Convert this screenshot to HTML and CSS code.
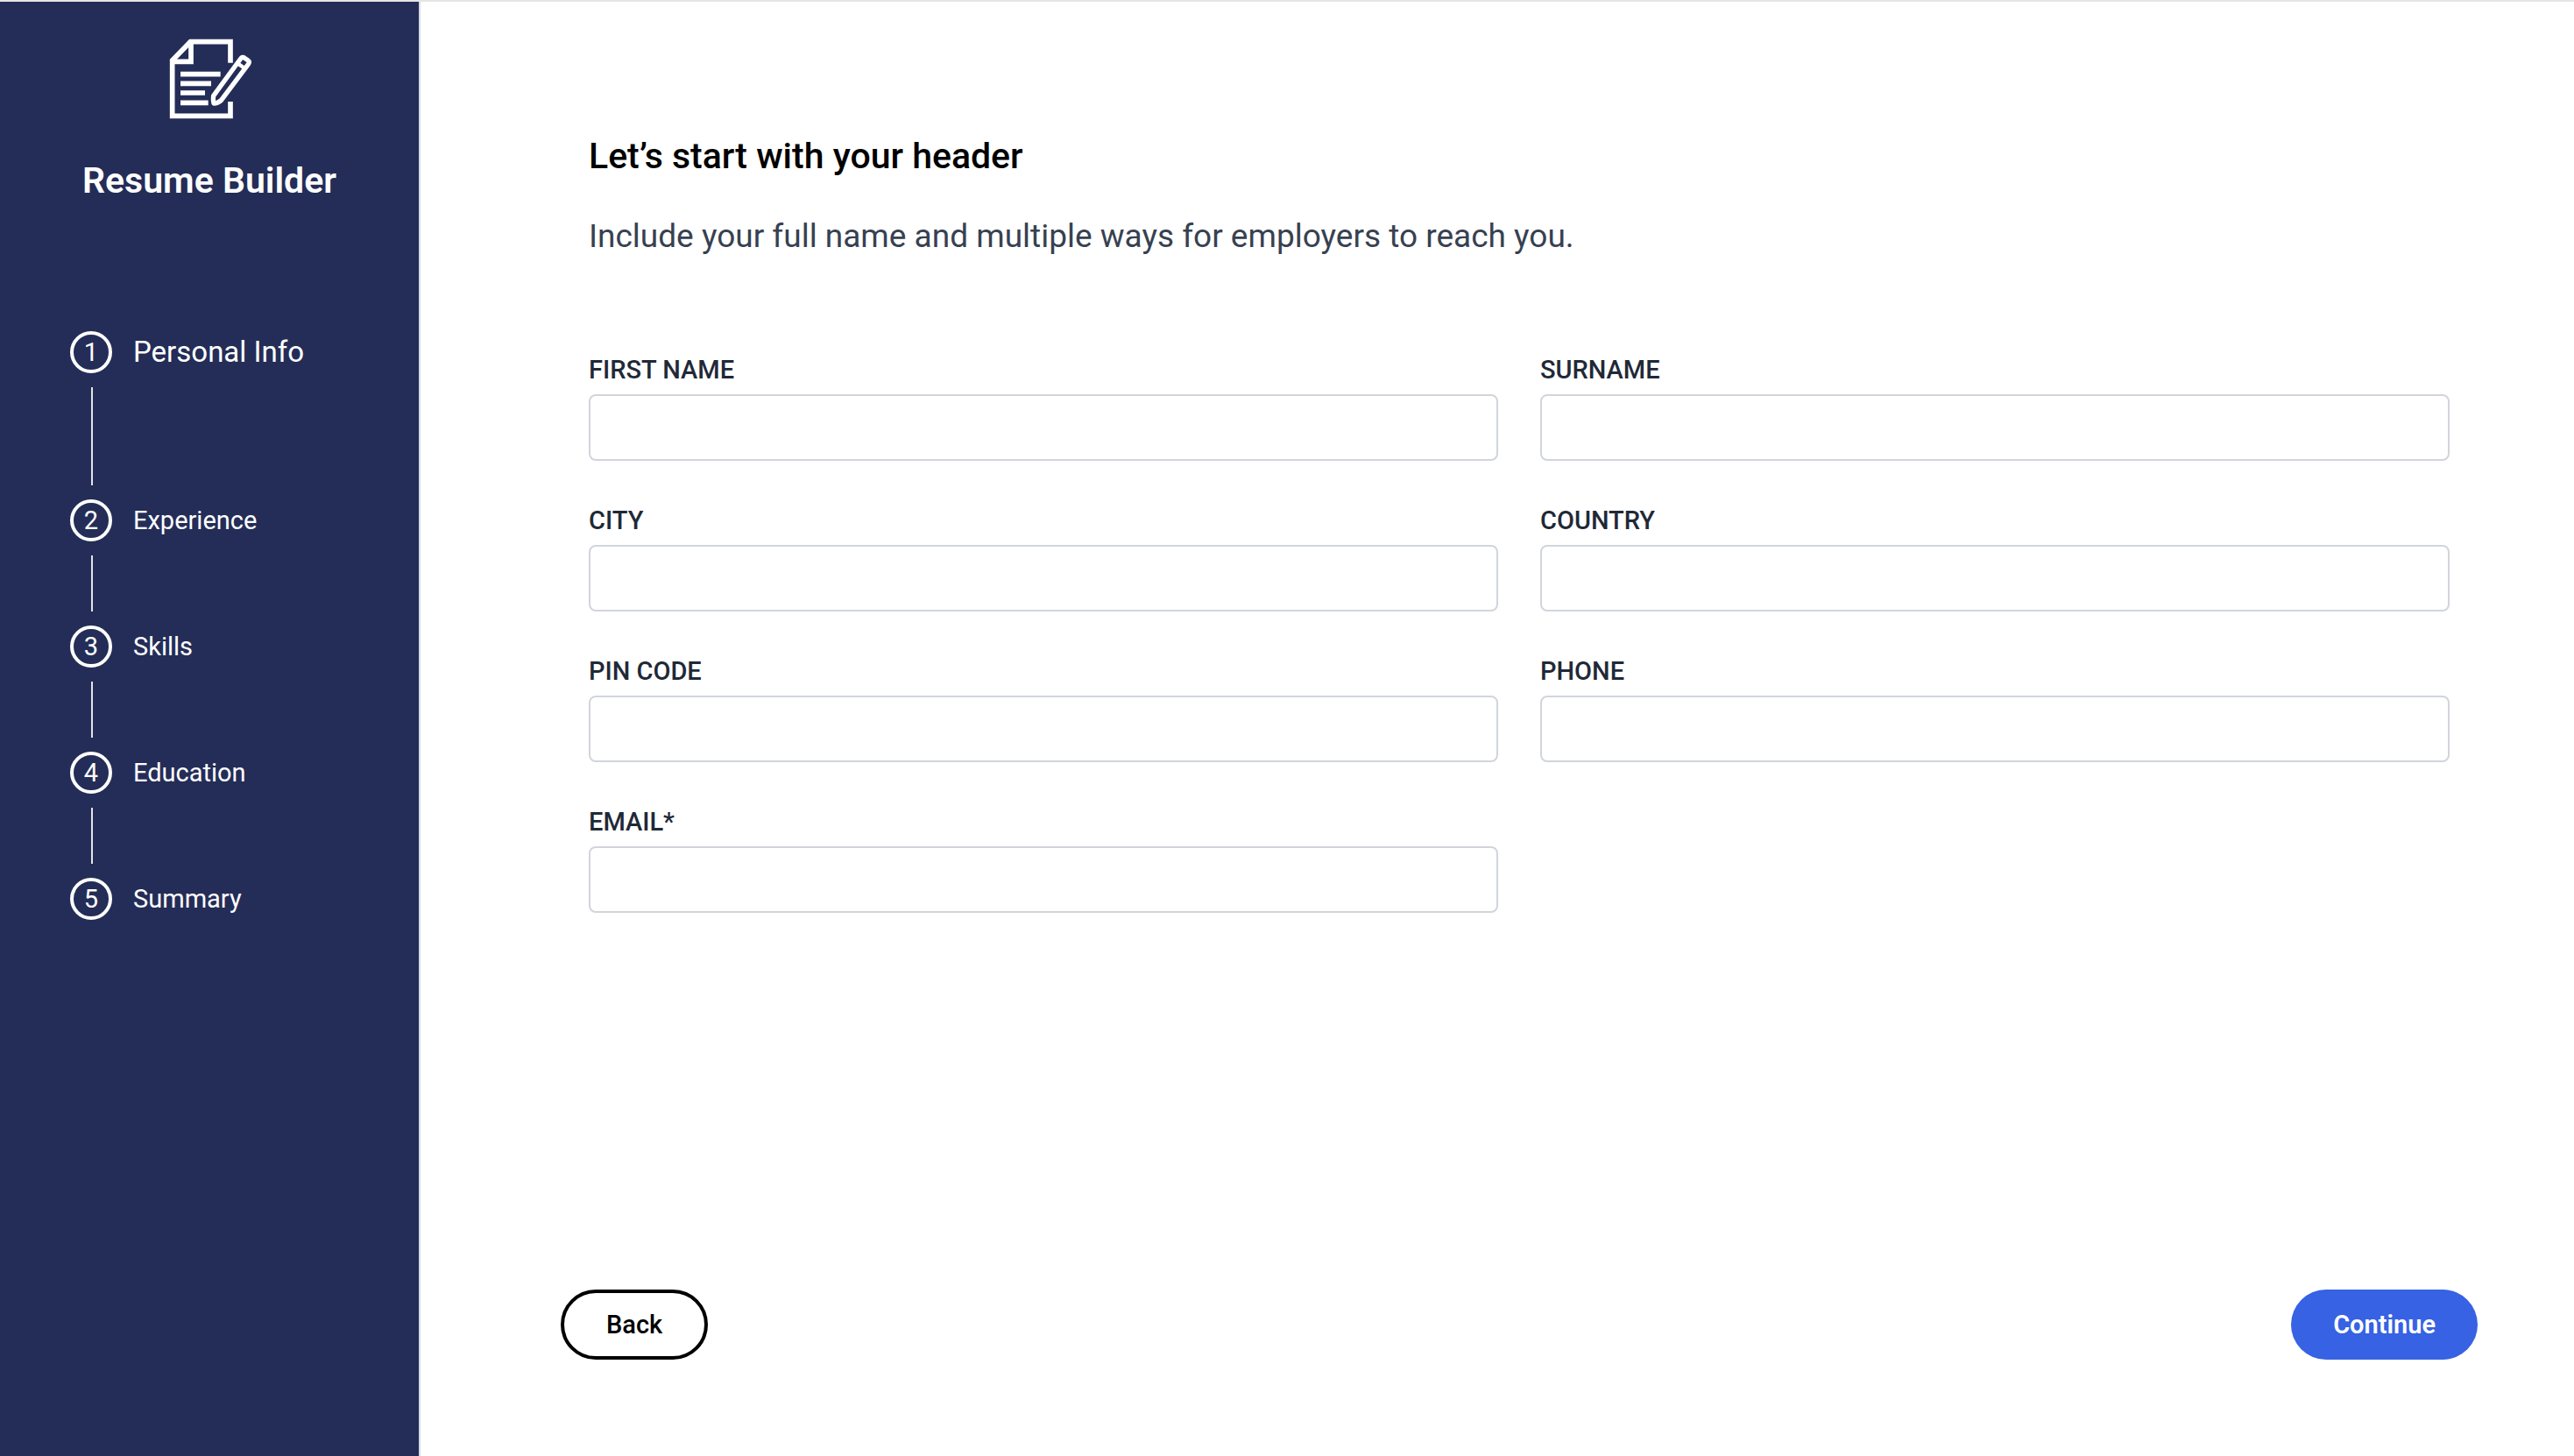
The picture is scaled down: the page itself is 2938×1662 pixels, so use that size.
FILE: index.html
```html
<!DOCTYPE html>
<html lang="en">
<head>
<meta charset="utf-8">
<meta name="viewport" content="width=device-width, initial-scale=1">
<title>Resume Builder</title>
<link rel="stylesheet" href="styles.css">
</head>
<body>
<div class="app">
  <aside class="sidebar">
    <div class="brand">
      <svg class="brand-icon" viewBox="33 36 288 288" fill="none" stroke="currentColor" stroke-width="17" aria-hidden="true">
        <path d="M249 125V53H112L50 117V307H249V258"/>
        <path d="M114 53V121H50"/>
        <path d="M78 164H215M78 196H183M78 228H162M78 262H173"/>
        <path stroke-width="16" stroke-linejoin="round" d="M191 238L284 111Q290 103 298 109L308 116Q316 122 310 130L217 254Q205 264 192 264Q189 250 191 238Z"/>
        <path stroke-width="13" d="M272 126L299 145"/>
      </svg>
      <h1 class="brand-name">Resume Builder</h1>
    </div>
    <ol class="steps">
      <li class="step step-current" aria-current="step"><span class="step-number">1</span><span class="step-label">Personal Info</span></li>
      <li class="step"><span class="step-number">2</span><span class="step-label">Experience</span></li>
      <li class="step"><span class="step-number">3</span><span class="step-label">Skills</span></li>
      <li class="step"><span class="step-number">4</span><span class="step-label">Education</span></li>
      <li class="step"><span class="step-number">5</span><span class="step-label">Summary</span></li>
    </ol>
  </aside>
  <main class="main">
    <form class="form">
      <div class="form-body">
        <h2 class="title">Let’s start with your header</h2>
        <p class="description">Include your full name and multiple ways for employers to reach you.</p>
        <div class="fields">
          <div class="field"><label for="first-name">FIRST NAME</label><input id="first-name" type="text"></div>
          <div class="field"><label for="surname">SURNAME</label><input id="surname" type="text"></div>
          <div class="field"><label for="city">CITY</label><input id="city" type="text"></div>
          <div class="field"><label for="country">COUNTRY</label><input id="country" type="text"></div>
          <div class="field"><label for="pin-code">PIN CODE</label><input id="pin-code" type="text"></div>
          <div class="field"><label for="phone">PHONE</label><input id="phone" type="tel"></div>
          <div class="field"><label for="email">EMAIL*</label><input id="email" type="email" required></div>
        </div>
      </div>
      <div class="actions">
        <button class="button button-outline" type="button">Back</button>
        <button class="button button-primary" type="submit">Continue</button>
      </div>
    </form>
  </main>
</div>
</body>
</html>
```
FILE: styles.css
```css
*,
*::before,
*::after {
  box-sizing: border-box;
}

body,
h1,
h2,
p,
ol {
  margin: 0;
  padding: 0;
}

body {
  font-family: Roboto, "Liberation Sans", sans-serif;
  font-size: 29px;
  line-height: 40px;
  color: #000;
  background: #fff;
}

.app {
  display: flex;
  min-height: 100vh;
  border-top: 2px solid #e5e5e5;
}

.sidebar {
  flex: none;
  width: 480px;
  color: #fff;
  background: #242d57;
  border-right: 2px solid #d8dbe3;
}

.brand {
  display: flex;
  flex-direction: column;
  align-items: center;
  gap: 40px;
  padding-top: 40px;
}

.brand-icon {
  width: 96px;
  height: 96px;
}

.brand-name {
  font-size: 41px;
  line-height: 56px;
  font-weight: 600;
}

.steps {
  padding: 144px 80px 0;
  list-style: none;
}

.step {
  display: grid;
  grid-template-columns: 48px 1fr;
  column-gap: 24px;
  align-items: center;
}

.step-number {
  display: flex;
  align-items: center;
  justify-content: center;
  height: 48px;
  border: 4px solid #fff;
  border-radius: 50%;
}

.step:not(:last-child)::after {
  content: "";
  width: 2px;
  height: 64px;
  margin: 16px 0 16px 24px;
  background: #e5e5e5;
}

.step-current .step-label {
  font-size: 33px;
}

.step-current:not(:last-child)::after {
  height: 112px;
}

.main {
  display: flex;
  flex: 1;
  padding: 148px 110px 110px 160px;
}

.form {
  display: flex;
  flex: 1;
  flex-direction: column;
  justify-content: space-between;
  gap: 48px;
}

.form-body {
  padding: 0 32px;
}

.title {
  font-size: 41px;
  line-height: 56px;
  font-weight: 500;
}

.description {
  margin-top: 36px;
  font-size: 37px;
  line-height: 56px;
  color: #374151;
}

.fields {
  display: grid;
  grid-template-columns: 1fr 1fr;
  gap: 48px;
  margin-top: 104px;
}

.field {
  display: flex;
  flex-direction: column;
  gap: 8px;
}

.field label {
  font-weight: 500;
  color: #1f2937;
}

.field input {
  width: 100%;
  height: 76px;
  padding: 0 24px;
  font: inherit;
  color: inherit;
  background: #fff;
  border: 2px solid #d1d5db;
  border-radius: 8px;
}

.actions {
  display: flex;
  justify-content: space-between;
}

.button {
  height: 80px;
  padding: 0 48px;
  font: inherit;
  font-weight: 500;
  border: 0;
  border-radius: 40px;
  cursor: pointer;
}

.button-outline {
  color: #000;
  background: #fff;
  border: 4px solid #000;
}

.button-primary {
  font-weight: 600;
  color: #fff;
  background: #3662e3;
}
```
